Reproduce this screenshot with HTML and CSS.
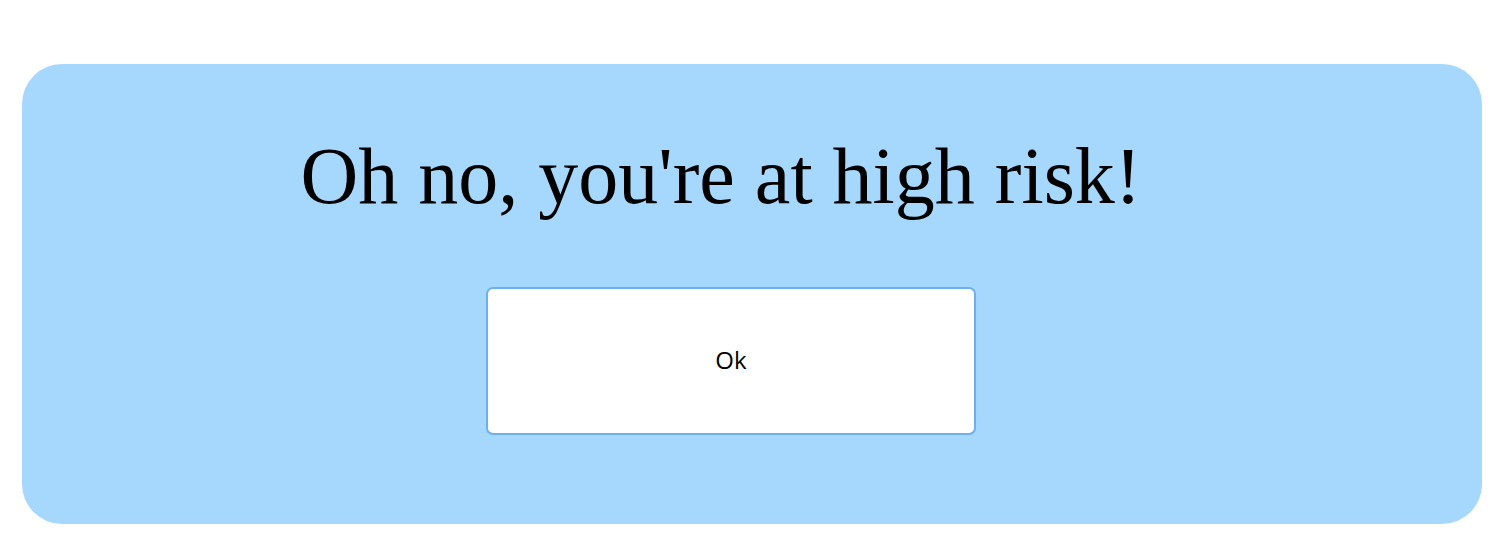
FILE: index.html
```html
<!DOCTYPE html>
<html>
<head>
<meta charset="utf-8">
<link rel="stylesheet" href="styles.css">
</head>
<body>
<div class="page">
  <div class="card">
    <h1 class="title">Oh no, you're at high risk!</h1>
    <button class="ok-btn">Ok</button>
  </div>
</div>
</body>
</html>
```
FILE: styles.css
```css
html, body {
  margin: 0;
  padding: 0;
  background: #ffffff;
}
.page {
  padding: 64px 20px 16px 22px;
}
.card {
  box-sizing: border-box;
  width: 1460px;
  height: 460px;
  background: #a6d7fd;
  border-radius: 40px;
  display: flex;
  flex-direction: column;
  align-items: center;
  padding: 66px 42px 0 0;
}
.title {
  margin: 0 20px 0 0;
  font-family: "Liberation Serif", "Times New Roman", serif;
  font-weight: normal;
  font-size: 80px;
  line-height: 92px;
  color: #000;
}
.ok-btn {
  margin-top: 65px;
  width: 490px;
  height: 148px;
  background: #ffffff;
  border: 2px solid #6cb0f2;
  border-radius: 7px;
  font-family: "Open Sans", sans-serif;
  font-size: 24px;
  color: #000;
  padding: 0 0 4px 0;
}
```
